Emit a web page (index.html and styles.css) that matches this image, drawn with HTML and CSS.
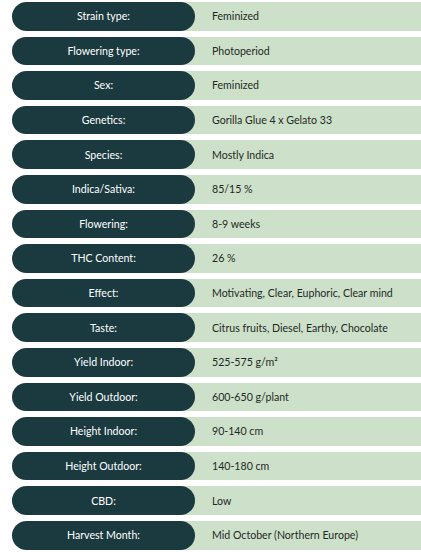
FILE: index.html
```html
<!DOCTYPE html>
<html lang="en">
<head>
  <meta charset="UTF-8" />
  <title>Strain Specs</title>
  <meta name="viewport" content="width=device-width, initial-scale=1.0"/>
  <link rel="stylesheet" href="styles.css">
</head>
<body>
  <div class="specs">
    <div class="row"><div class="label">Strain type:</div><div class="value">Feminized</div></div>
    <div class="row"><div class="label">Flowering type:</div><div class="value">Photoperiod</div></div>
    <div class="row"><div class="label">Sex:</div><div class="value">Feminized</div></div>
    <div class="row"><div class="label">Genetics:</div><div class="value">Gorilla Glue 4 x Gelato 33</div></div>
    <div class="row"><div class="label">Species:</div><div class="value">Mostly Indica</div></div>
    <div class="row"><div class="label">Indica/Sativa:</div><div class="value">85/15 %</div></div>
    <div class="row"><div class="label">Flowering:</div><div class="value">8-9 weeks</div></div>
    <div class="row"><div class="label">THC Content:</div><div class="value">26 %</div></div>
    <div class="row"><div class="label">Effect:</div><div class="value">Motivating, Clear, Euphoric, Clear mind</div></div>
    <div class="row"><div class="label">Taste:</div><div class="value">Citrus fruits, Diesel, Earthy, Chocolate</div></div>
    <div class="row"><div class="label">Yield Indoor:</div><div class="value">525-575 g/m²</div></div>
    <div class="row"><div class="label">Yield Outdoor:</div><div class="value">600-650 g/plant</div></div>
    <div class="row"><div class="label">Height Indoor:</div><div class="value">90-140 cm</div></div>
    <div class="row"><div class="label">Height Outdoor:</div><div class="value">140-180 cm</div></div>
    <div class="row"><div class="label">CBD:</div><div class="value">Low</div></div>
    <div class="row"><div class="label">Harvest Month:</div><div class="value">Mid October (Northern Europe)</div></div>
  </div>
</body>
</html>
```

FILE: styles.css
```css
body {
  margin: 0;
  background: #fff;
  font-family: Lato, sans-serif;
  font-size: 10.6px;
}

.specs {
  display: flex;
  flex-direction: column;
  gap: 6px;
  padding: 2px 0 0 12px;
}

.row {
  display: flex;
  height: 28.6px;
}

.label {
  position: relative;
  z-index: 1;
  flex: 0 0 183px;
  display: flex;
  align-items: center;
  justify-content: center;
  background: #1b3a40;
  color: #fff;
  border-radius: 15px;
}

.value {
  flex: 1;
  display: flex;
  align-items: center;
  margin-left: -20px;
  padding-left: 37px;
  background: #cde0c9;
  color: #1f2a25;
}
```
